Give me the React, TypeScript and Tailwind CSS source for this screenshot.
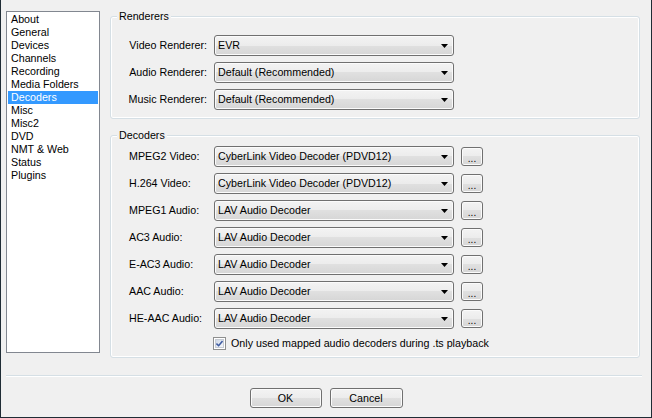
import React from "react";

const pages = [
  "About",
  "General",
  "Devices",
  "Channels",
  "Recording",
  "Media Folders",
  "Decoders",
  "Misc",
  "Misc2",
  "DVD",
  "NMT & Web",
  "Status",
  "Plugins",
];

const renderers = [
  { label: "Video Renderer:", value: "EVR" },
  { label: "Audio Renderer:", value: "Default (Recommended)" },
  { label: "Music Renderer:", value: "Default (Recommended)" },
];

const decoders = [
  { label: "MPEG2 Video:", value: "CyberLink Video Decoder (PDVD12)" },
  { label: "H.264 Video:", value: "CyberLink Video Decoder (PDVD12)" },
  { label: "MPEG1 Audio:", value: "LAV Audio Decoder" },
  { label: "AC3 Audio:", value: "LAV Audio Decoder" },
  { label: "E-AC3 Audio:", value: "LAV Audio Decoder" },
  { label: "AAC Audio:", value: "LAV Audio Decoder" },
  { label: "HE-AAC Audio:", value: "LAV Audio Decoder" },
];

const Combo: React.FC<{ value: string }> = ({ value }) => (
  <div className="w-[240px] h-[21px] shrink-0 rounded-[3px] border border-[#707070] bg-[linear-gradient(#f3f3f3,#ececec_50%,#e0e0e0_50%,#d6d6d6)] shadow-[inset_0_0_0_1px_#fbfbfb] flex items-center justify-between pl-[3px] pr-[5px]">
    <span className="leading-[13px]">{value}</span>
    <svg width="7" height="4" viewBox="0 0 7 4">
      <path d="M0 0H7L3.5 4Z" fill="#000" />
    </svg>
  </div>
);

const GroupBox: React.FC<{ title: string; className: string; children: React.ReactNode }> = ({
  title,
  className,
  children,
}) => (
  <div
    className={`relative w-[530px] rounded-[3px] border border-[#d5dfe5] shadow-[inset_0_0_0_1px_#ffffff] ${className}`}
  >
    <span className="absolute -top-[7px] left-[6px] px-[2px] bg-[#f0f0f0] leading-[13px]">{title}</span>
    {children}
  </div>
);

export default function App() {
  return (
    <div className="w-[652px] h-[418px] bg-[#f0f0f0] border-x border-b border-[#1f2c35] flex flex-col font-['Liberation_Sans',Arial,sans-serif] text-[10.7px] text-black">
      <div className="flex pl-[5px]">
        {/* page list */}
        <div className="mt-[11px] w-[94px] h-[342px] border border-[#828790] bg-white p-[1px]">
          {pages.map((p) => (
            <div
              key={p}
              className={`h-[13px] leading-[13px] pl-[3px] ${
                p === "Decoders" ? "bg-[#3399ff] text-white" : ""
              }`}
            >
              {p}
            </div>
          ))}
        </div>

        <div className="ml-[10px] flex flex-col">
          <GroupBox title="Renderers" className="mt-[16px] h-[103px] pt-[18px] pb-[8px]">
            <div className="flex flex-col gap-[6px]">
              {renderers.map((r) => (
                <div key={r.label} className="flex items-center">
                  <span className="w-[96px] text-right leading-[13px]">{r.label}</span>
                  <div className="ml-[7px]">
                    <Combo value={r.value} />
                  </div>
                </div>
              ))}
            </div>
          </GroupBox>

          <GroupBox title="Decoders" className="mt-[16px] h-[223px] pt-[10px]">
            <div className="flex flex-col gap-[6px]">
              {decoders.map((d) => (
                <div key={d.label} className="flex items-center pl-[18px]">
                  <span className="w-[85px] leading-[13px]">{d.label}</span>
                  <Combo value={d.value} />
                  <button className="ml-[7px] w-[22px] h-[19px] rounded-[3px] border border-[#707070] bg-[linear-gradient(#f3f3f3,#ececec_50%,#e0e0e0_50%,#d6d6d6)] shadow-[inset_0_0_0_1px_#fbfbfb] flex items-end justify-center pb-[2px] leading-[9px] text-[10px]">
                    ...
                  </button>
                </div>
              ))}
            </div>
            <div className="mt-[8px] ml-[102px] flex items-center h-[13px]">
              <div className="w-[13px] h-[13px] border border-[#8e8f8f] bg-white p-[1px]">
                <div className="w-full h-full bg-[linear-gradient(135deg,#cfd8e6,#f4f6fa)] border border-[#c6cbd3] flex items-center justify-center">
                  <svg width="8" height="7" viewBox="0 0 8 7">
                    <path d="M0.5 3.5L3 6L7.5 0.8" stroke="#3d5aa0" strokeWidth="1.8" fill="none" />
                  </svg>
                </div>
              </div>
              <span className="ml-[5px] leading-[13px]">Only used mapped audio decoders during .ts playback</span>
            </div>
          </GroupBox>
        </div>
      </div>

      {/* separator */}
      <div className="mt-[17px] ml-[5px] mr-[9px] h-[2px] border-t border-[#d5dfe5] border-b border-b-white" />

      <div className="mt-[11px] flex justify-center gap-[8px]">
        <button className="w-[72px] h-[20px] rounded-[3px] border border-[#707070] bg-[linear-gradient(#f3f3f3,#ececec_50%,#e0e0e0_50%,#d6d6d6)] shadow-[inset_0_0_0_1px_#fbfbfb] leading-[13px]">
          OK
        </button>
        <button className="w-[73px] h-[20px] rounded-[3px] border border-[#707070] bg-[linear-gradient(#f3f3f3,#ececec_50%,#e0e0e0_50%,#d6d6d6)] shadow-[inset_0_0_0_1px_#fbfbfb] leading-[13px]">
          Cancel
        </button>
      </div>
    </div>
  );
}
